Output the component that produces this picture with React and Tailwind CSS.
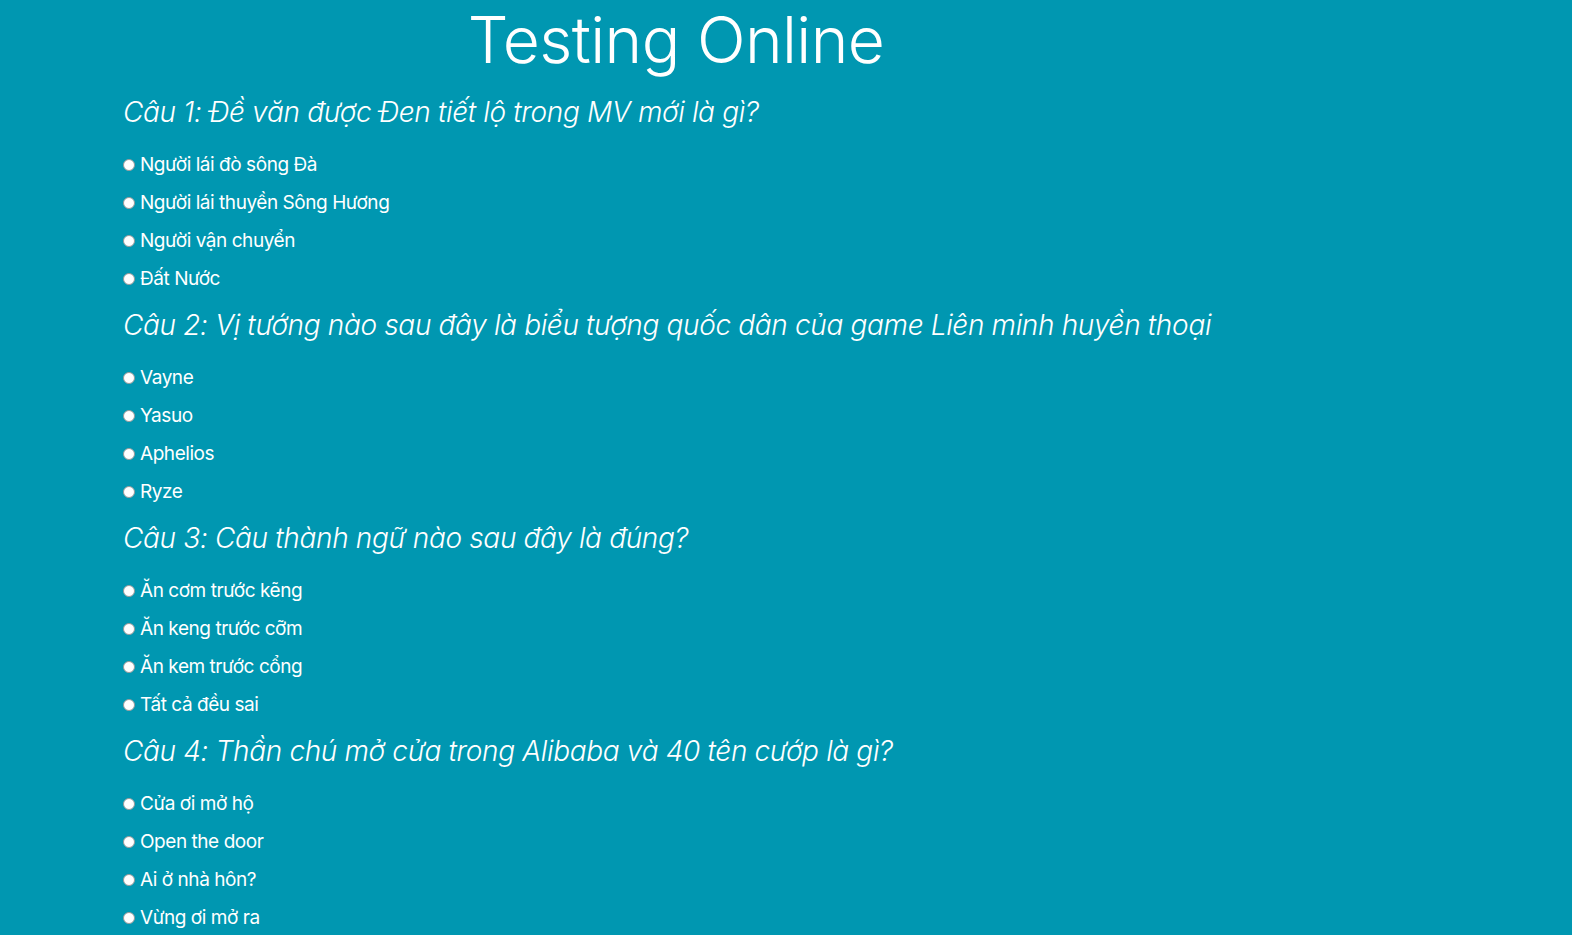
import React, { useState } from 'react';

const questions = [
  {
    title: 'Câu 1: Đề văn được Đen tiết lộ trong MV mới là gì?',
    options: ['Người lái đò sông Đà', 'Người lái thuyền Sông Hương', 'Người vận chuyển', 'Đất Nước'],
  },
  {
    title: 'Câu 2: Vị tướng nào sau đây là biểu tượng quốc dân của game Liên minh huyền thoại',
    options: ['Vayne', 'Yasuo', 'Aphelios', 'Ryze'],
  },
  {
    title: 'Câu 3: Câu thành ngữ nào sau đây là đúng?',
    options: ['Ăn cơm trước kẽng', 'Ăn keng trước cỡm', 'Ăn kem trước cổng', 'Tất cả đều sai'],
  },
  {
    title: 'Câu 4: Thần chú mở cửa trong Alibaba và 40 tên cướp là gì?',
    options: ['Cửa ơi mở hộ', 'Open the door', 'Ai ở nhà hôn?', 'Vừng ơi mở ra'],
  },
];

const App = () => {
  const [answers, setAnswers] = useState({});

  return (
    <div className="min-h-screen bg-[#0097b1] text-white font-['Inter',sans-serif]">
      <div className="w-[1106px] ml-[123px]">
        <h1 className="text-center text-[64px] font-light leading-[80px] tracking-[-0.6px] pb-[5px]">Testing Online</h1>

        {questions.map((q, qi) => (
          <div key={qi}>
            <h3 className="italic font-light text-[28px] leading-[32px] mt-[11px] mb-[18px] tracking-[-0.35px]">{q.title}</h3>
            <div className="flex flex-col">
              {q.options.map((opt, oi) => (
                <label key={oi} className="flex items-center h-[38px] text-[19px] tracking-[-0.45px] cursor-pointer">
                  <span className="w-[12px] h-[12px] rounded-full bg-white border border-[#9a9a9a] mr-[5px] shrink-0" />
                  <input
                    type="radio"
                    name={`q${qi}`}
                    className="hidden"
                    checked={answers[qi] === oi}
                    onChange={() => setAnswers({ ...answers, [qi]: oi })}
                  />
                  {opt}
                </label>
              ))}
            </div>
          </div>
        ))}
      </div>
    </div>
  );
};

export default App;
